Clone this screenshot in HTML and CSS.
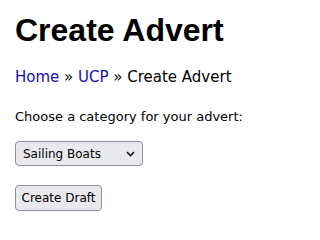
FILE: index.html
```html
<!DOCTYPE html>
<html>
<head>
<meta charset="utf-8">
<link rel="stylesheet" href="styles.css">
</head>
<body>
<h1 class="title">Create Advert</h1>
<div class="crumbs"><a href="#">Home</a> » <a href="#">UCP</a> » Create Advert</div>
<p class="lead">Choose a category for your advert:</p>
<form class="form">
  <div class="select-wrap">
    <select class="select">
      <option>Sailing Boats</option>
    </select>
    <svg class="chev" width="9" height="6" viewBox="0 0 9 6"><path d="M1 1.2 L4.5 4.6 L8 1.2" fill="none" stroke="#222" stroke-width="1.7"/></svg>
  </div>
  <button type="button" class="btn">Create Draft</button>
</form>
</body>
</html>
```
FILE: styles.css
```css
html, body { margin: 0; padding: 0; background: #fff; }
body {
  padding: 12px 15px 0 15px;
  font-family: "DejaVu Sans", Verdana, sans-serif;
  font-size: 13px;
  color: #000;
}
.title {
  font-family: "Liberation Sans", Arial, sans-serif;
  font-size: 32px;
  font-weight: bold;
  margin: 0;
  line-height: 37px;
}
.crumbs { margin-top: 18px; line-height: 20px; font-size: 15px; }
.crumbs a { color: #1a0dab; text-decoration: none; }
.lead { margin: 20px 0 0 0; line-height: 20px; font-size: 13px; }
.form { display: flex; flex-direction: column; align-items: flex-start; gap: 19px; margin-top: 14px; }
.select-wrap { position: relative; }
.select {
  appearance: none;
  -webkit-appearance: none;
  width: 128px;
  height: 25px;
  background: #e9e9ed;
  border: 1px solid #8f8f9d;
  border-radius: 4px;
  padding: 0 0 0 7px;
  font-family: "DejaVu Sans", sans-serif;
  font-size: 12px;
  color: #000;
}
.chev { position: absolute; right: 8px; top: 10px; pointer-events: none; }
.btn {
  height: 26px;
  width: 87px;
  background: #e9e9ed;
  border: 1px solid #8f8f9d;
  border-radius: 4px;
  padding: 0;
  font-family: "DejaVu Sans", sans-serif;
  font-size: 12px;
  color: #000;
}
```
